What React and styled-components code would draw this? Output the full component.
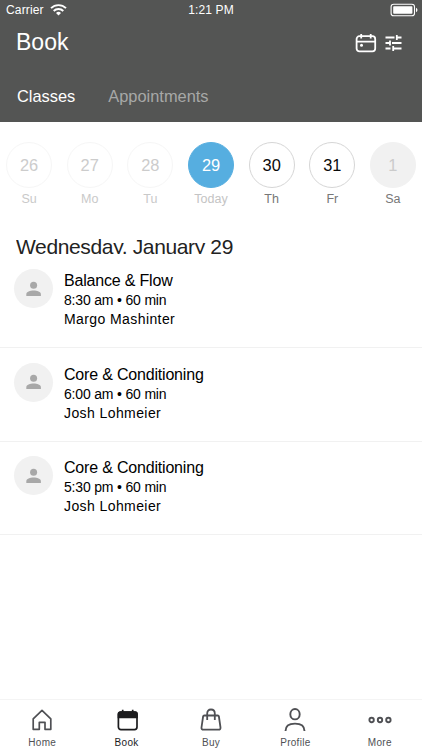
import React from 'react';
import styled, { createGlobalStyle } from 'styled-components';

const GlobalStyle = createGlobalStyle`
  body {
    margin: 0;
    background: #fff;
  }
`;

const Screen = styled.div`
  width: 422px;
  height: 750px;
  display: flex;
  flex-direction: column;
  overflow: hidden;
  font-family: "Liberation Sans", Arial, sans-serif;
  color: #000;
  white-space: nowrap;
`;

const Header = styled.header`
  height: 122px;
  flex: none;
  box-sizing: border-box;
  background: #545554;
  color: #fff;
`;

const StatusBar = styled.div`
  height: 20px;
  display: grid;
  grid-template-columns: 1fr auto 1fr;
  align-items: center;
  padding: 0 4px 0 6px;
  font-size: 12px;
`;

const Carrier = styled.div`
  display: flex;
  align-items: center;
  gap: 6px;
  letter-spacing: 0.15px;
`;

const Clock = styled.span`
  padding-right: 2px;
  letter-spacing: 0.15px;
`;

const Battery = styled.svg`
  justify-self: end;
`;

const TitleRow = styled.div`
  height: 45px;
  display: flex;
  align-items: center;
  justify-content: space-between;
  padding: 0 20px 0 16px;
`;

const Title = styled.h1`
  margin: 0;
  font-size: 23px;
  font-weight: 400;
`;

const Actions = styled.div`
  display: flex;
  align-items: center;
  gap: 8px;
`;

const Tabs = styled.nav`
  height: 57px;
  display: flex;
  align-items: center;
  gap: 33px;
  padding: 5px 17px 0;
  box-sizing: border-box;
`;

const Tab = styled.span`
  font-size: 16.4px;
  color: ${({ $active }) => ($active ? '#fff' : '#a7a8a7')};
`;

const Week = styled.div`
  display: flex;
  justify-content: center;
  padding-top: 19.5px;
`;

const Day = styled.div`
  width: 60.65px;
  flex: none;
  display: flex;
  flex-direction: column;
  align-items: center;
`;

const dayStyles = {
  past: { background: '#fff', border: '#f6f6f6', color: '#ccc', label: '#c9c9c9' },
  today: { background: '#56aee0', border: '#56aee0', color: '#fff', label: '#c4c4c4' },
  open: { background: '#fff', border: '#d6d6d6', color: '#0a0a0a', label: '#777' },
  closed: { background: '#f1f1f1', border: '#f1f1f1', color: '#cbcbcb', label: '#777' },
};

const DayCircle = styled.div`
  width: 46px;
  height: 46px;
  box-sizing: border-box;
  display: flex;
  align-items: center;
  justify-content: center;
  padding-top: 1px;
  border: 1px solid ${({ $kind }) => dayStyles[$kind].border};
  border-radius: 50%;
  background: ${({ $kind }) => dayStyles[$kind].background};
  color: ${({ $kind }) => dayStyles[$kind].color};
  font-size: 16.4px;
`;

const DayLabel = styled.div`
  margin-top: 4px;
  font-size: 12.5px;
  line-height: 15px;
  color: ${({ $kind }) => dayStyles[$kind].label};
`;

// The heading box is shorter than its line, so the descenders are cut off.
const DateHeading = styled.h2`
  margin: 28.5px 0 0 16px;
  height: 19px;
  overflow: hidden;
  font-size: 21px;
  line-height: 24px;
  font-weight: 400;
  letter-spacing: -0.36px;
  color: #222;
`;

const ClassList = styled.div`
  flex: 1;
  padding-top: 15px;
`;

const ClassRow = styled.div`
  height: 93.7px;
  box-sizing: border-box;
  display: flex;
  gap: 11px;
  padding-left: 14px;
  border-bottom: 1px solid #f1f1f1;

  &:first-child {
    height: 79px;
  }

  & + & {
    padding-top: 14.5px;
  }
`;

const Avatar = styled.div`
  width: 39px;
  height: 39px;
  flex: none;
  display: flex;
  align-items: center;
  justify-content: center;
  border-radius: 50%;
  background: #f1f1f1;
`;

const Details = styled.div`
  padding-top: 2px;
`;

const ClassName = styled.div`
  font-size: 16px;
  line-height: 20px;
  letter-spacing: -0.19px;
`;

const ClassInfo = styled.div`
  font-size: 14px;
  line-height: 19px;
  letter-spacing: ${({ $wide }) => ($wide ? '0.41px' : '-0.18px')};
`;

const TabBar = styled.nav`
  height: 51px;
  flex: none;
  box-sizing: border-box;
  display: grid;
  grid-template-columns: repeat(5, 1fr);
  border-top: 1px solid #f4f4f4;
`;

const TabItem = styled.div`
  display: flex;
  flex-direction: column;
  align-items: center;
  padding-top: 8px;
  font-size: 10px;
  line-height: 12px;
  letter-spacing: 0.3px;
  color: ${({ $active }) => ($active ? '#1c1c1e' : '#4f5054')};

  svg {
    margin-bottom: 5px;
  }
`;

const WifiIcon = () => (
  <svg width="17" height="12" viewBox="0 0 17 12" fill="none" stroke="#fff" strokeWidth="1.9">
    <path d="M1 4.2a10.6 10.6 0 0 1 15 0" />
    <path d="M3.7 7a6.8 6.8 0 0 1 9.6 0" />
    <path d="M8.5 11.6 6 9.1a3.5 3.5 0 0 1 5 0z" fill="#fff" stroke="none" />
  </svg>
);

const BatteryIcon = () => (
  <Battery width="28" height="14" viewBox="0 0 28 14" fill="none">
    <rect x="1.1" y="1.2" width="23.4" height="11.6" rx="2.6" stroke="#fff" strokeWidth="1.1" />
    <rect x="3.2" y="3.2" width="19.2" height="7.6" rx="0.8" fill="#fff" />
    <path d="M26 4.8q1.5.8 1.5 2.2T26 9.2z" fill="#fff" />
  </Battery>
);

const CalendarIcon = () => (
  <svg width="22" height="20" viewBox="0 0 22 20" fill="none" stroke="#fff" strokeWidth="1.8">
    <rect x="1.6" y="3.2" width="18.6" height="15.2" rx="2.8" />
    <path d="M2 8.7h18M6.2 1v4.4M15.7 1v4.4" />
    <circle cx="6.5" cy="12.3" r="1.5" fill="#fff" stroke="none" />
  </svg>
);

const FilterIcon = () => (
  <svg width="17" height="18" viewBox="0 0 17 18" fill="none" stroke="#fff" strokeWidth="1.8">
    <path d="M.5 3.5h9M11.8 3.5h4.7M11.8 1v5" />
    <path d="M.5 9H5M5 6.5v5M7 9h9.5" />
    <path d="M.5 14.5h5M8.2 14.5h8.3M8.2 12v5" />
  </svg>
);

const PersonIcon = () => (
  <svg width="16" height="16" viewBox="0 0 16 16" fill="#a8a8a8">
    <circle cx="7.6" cy="4.3" r="3.5" />
    <path d="M.3 15v-1.6c0-2.7 3.8-3.8 7.3-3.8s7.3 1.1 7.3 3.8V15z" />
  </svg>
);

const HomeIcon = () => (
  <svg width="24" height="24" viewBox="0 0 24 24" fill="none" stroke="#4f5054" strokeWidth="1.7">
    <path d="M3.2 21.300V10.800L12 2.300l8.800 8.500v10.500h-5.800v-7H9.300v7z" strokeLinejoin="round" />
  </svg>
);

const BookIcon = () => (
  <svg width="24" height="24" viewBox="0 0 24 24" fill="none" stroke="#1c1c1e" strokeWidth="1.7">
    <rect x="3.4" y="4" width="18.6" height="17.6" rx="2.5" />
    <path d="M3.5 9.500V6q0-2 2-2H20q2 0 2 2v3.500z" fill="#1c1c1e" />
    <path d="M7.700 1.800V5M17.700 1.800V5" />
  </svg>
);

const BagIcon = () => (
  <svg width="24" height="24" viewBox="0 0 24 24" fill="none" stroke="#4f5054" strokeWidth="1.8">
    <path d="M5.300 7.500h13.400q1 0 1.200 1l1.600 11q.3 2.200-2 2.200h-15q-2.300 0-2-2.200l1.600-11q.2-1 1.200-1z" />
    <path d="M8.200 12V5.500q0-4 3.800-4t3.800 4V12" />
  </svg>
);

const ProfileIcon = () => (
  <svg width="24" height="24" viewBox="0 0 24 24" fill="none" stroke="#4f5054" strokeWidth="1.900">
    <ellipse cx="12" cy="6.200" rx="4.700" ry="5.200" />
    <path d="M2.500 23c0-5 3.300-7.400 9.500-7.400s9.500 2.400 9.500 7.400" />
  </svg>
);

const MoreIcon = () => (
  <svg width="24" height="24" viewBox="0 0 24 24" fill="none" stroke="#4f5054" strokeWidth="1.900">
    <circle cx="3.600" cy="12" r="2.200" />
    <circle cx="12" cy="12" r="2.200" />
    <circle cx="20.400" cy="12" r="2.200" />
  </svg>
);

const days = [
  { date: 26, label: 'Su', kind: 'past' },
  { date: 27, label: 'Mo', kind: 'past' },
  { date: 28, label: 'Tu', kind: 'past' },
  { date: 29, label: 'Today', kind: 'today' },
  { date: 30, label: 'Th', kind: 'open' },
  { date: 31, label: 'Fr', kind: 'open' },
  { date: 1, label: 'Sa', kind: 'closed' },
];

const classes = [
  { name: 'Balance & Flow', time: '8:30 am', teacher: 'Margo Mashinter' },
  { name: 'Core & Conditioning', time: '6:00 am', teacher: 'Josh Lohmeier' },
  { name: 'Core & Conditioning', time: '5:30 pm', teacher: 'Josh Lohmeier' },
];

const navItems = [
  { label: 'Home', Icon: HomeIcon },
  { label: 'Book', Icon: BookIcon },
  { label: 'Buy', Icon: BagIcon },
  { label: 'Profile', Icon: ProfileIcon },
  { label: 'More', Icon: MoreIcon },
];

const App = () => (
  <Screen>
    <GlobalStyle />
    <Header>
      <StatusBar>
        <Carrier>Carrier <WifiIcon /></Carrier>
        <Clock>1:21 PM</Clock>
        <BatteryIcon />
      </StatusBar>
      <TitleRow>
        <Title>Book</Title>
        <Actions>
          <CalendarIcon />
          <FilterIcon />
        </Actions>
      </TitleRow>
      <Tabs>
        <Tab $active>Classes</Tab>
        <Tab>Appointments</Tab>
      </Tabs>
    </Header>
    <Week>
      {days.map(({ date, label, kind }) => (
        <Day key={label}>
          <DayCircle $kind={kind}>{date}</DayCircle>
          <DayLabel $kind={kind}>{label}</DayLabel>
        </Day>
      ))}
    </Week>
    <DateHeading>Wednesday, January 29</DateHeading>
    <ClassList>
      {classes.map(({ name, time, teacher }) => (
        <ClassRow key={time}>
          <Avatar><PersonIcon /></Avatar>
          <Details>
            <ClassName>{name}</ClassName>
            <ClassInfo>{time} • 60 min</ClassInfo>
            <ClassInfo $wide>{teacher}</ClassInfo>
          </Details>
        </ClassRow>
      ))}
    </ClassList>
    <TabBar>
      {navItems.map(({ label, Icon }) => (
        <TabItem key={label} $active={label === 'Book'}>
          <Icon />
          {label}
        </TabItem>
      ))}
    </TabBar>
  </Screen>
);

export default App;
